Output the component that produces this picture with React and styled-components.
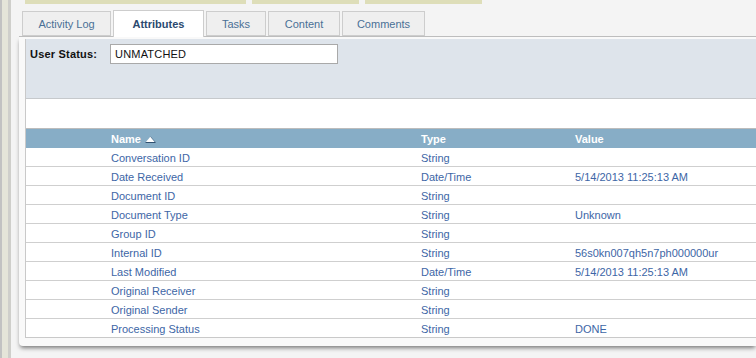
import styled, { createGlobalStyle } from "styled-components";

const GlobalStyle = createGlobalStyle`
  html, body {
    margin: 0;
    padding: 0;
    background: #f4f4f4;
    font-family: "Liberation Sans", Arial, sans-serif;
    font-size: 11px;
    overflow: hidden;
  }
`;

const Page = styled.div`
  display: flex;
  width: 756px;
  height: 358px;
  overflow: hidden;
`;

const Rail = styled.div`
  width: 19px;
  flex-shrink: 0;
  background: linear-gradient(
    to right,
    #c2c2c2 0 2px,
    #e5e5d9 2px 8px,
    #cfcfcb 8px 11px,
    #f4f4f4 11px
  );
`;

const Main = styled.div`
  flex: 1;
  display: flex;
  flex-direction: column;
  min-width: 0;
`;

const TopBars = styled.div`
  display: flex;
  gap: 6px;
  padding-left: 6px;
  height: 4px;
`;

const TopBar = styled.div`
  width: ${(p) => p.w}px;
  background: #dedeb9;
`;

const TabRow = styled.div`
  display: flex;
  align-items: flex-end;
  gap: 2px;
  margin-top: 6px;
  padding-left: 3px;
  height: 26px;
  border-bottom: 1px solid #bdbdbd;
  position: relative;
  z-index: 1;
`;

const Tab = styled.div`
  box-sizing: border-box;
  width: ${(p) => p.w}px;
  height: ${(p) => (p.active ? 27 : 25)}px;
  margin-bottom: ${(p) => (p.active ? -1 : 0)}px;
  display: flex;
  align-items: center;
  justify-content: center;
  background: ${(p) => (p.active ? "#ffffff" : "#efefef")};
  border: 1px solid #cdcdcd;
  border-bottom: ${(p) => (p.active ? "none" : "1px solid #cdcdcd")};
  color: ${(p) => (p.active ? "#2b4a6f" : "#4a6f96")};
  font-weight: ${(p) => (p.active ? "bold" : "normal")};
  font-size: 11px;
  padding-top: ${(p) => (p.active ? 0 : 1)}px;
`;

const Card = styled.div`
  flex: 1;
  display: flex;
  flex-direction: column;
  background: #f9f9f9;
  padding: 2px 0 0 6px;
  margin-bottom: 12px;
  border-bottom-left-radius: 4px;
  box-shadow: 0 3px 4px -1px rgba(0, 0, 0, 0.5);
`;

const Content = styled.div`
  border-left: 1px solid #c9c9c9;
  border-bottom: 1px solid #c9c9c9;
  background: #ffffff;
`;

const StatusPanel = styled.div`
  height: 60px;
  background: #dee4eb;
  border-bottom: 1px solid #c6c9cc;
  display: flex;
  align-items: flex-start;
  padding-top: 5px;
  box-sizing: border-box;
`;

const StatusLabel = styled.div`
  width: 80px;
  padding-left: 4px;
  font-weight: bold;
  color: #111;
  line-height: 20px;
  letter-spacing: 0.2px;
`;

const StatusInput = styled.div`
  box-sizing: border-box;
  width: 228px;
  height: 20px;
  background: #fff;
  border: 1px solid #a9a9a9;
  padding-left: 4px;
  line-height: 18px;
  color: #111;
  letter-spacing: 0.2px;
`;

const Spacer = styled.div`
  height: 29px;
  border-bottom: 1px solid #bcbcbc;
`;

const Grid = styled.div`
  display: grid;
  grid-template-columns: 85px 310px 154px 1fr;
  align-items: center;
  box-sizing: border-box;
  height: ${(p) => (p.head ? 19 : 19)}px;
  padding-top: 1px;
  background: ${(p) => (p.head ? "#87adc6" : "#ffffff")};
  border-bottom: ${(p) => (p.head ? "none" : "1px solid #cfcfcf")};
  color: ${(p) => (p.head ? "#ffffff" : "#3d66a6")};
  font-weight: ${(p) => (p.head ? "bold" : "normal")};
  &:last-child {
    border-bottom: none;
    height: 18px;
  }
`;

const Cell = styled.div`
  display: flex;
  align-items: center;
  gap: 4px;
  white-space: nowrap;
`;

const SortArrow = () => (
  <svg width="11" height="7" viewBox="0 0 11 7">
    <polygon points="5.5,0.5 10.5,6.5 0.5,6.5" fill="#ffffff" />
    <line x1="0.5" y1="6.5" x2="10.5" y2="6.5" stroke="#2f4f6f" strokeWidth="1" />
    <line x1="5.5" y1="0.5" x2="10.5" y2="6.5" stroke="#4c6f8c" strokeWidth="0.8" />
  </svg>
);

const rows = [
  ["Conversation ID", "String", ""],
  ["Date Received", "Date/Time", "5/14/2013 11:25:13 AM"],
  ["Document ID", "String", ""],
  ["Document Type", "String", "Unknown"],
  ["Group ID", "String", ""],
  ["Internal ID", "String", "56s0kn007qh5n7ph000000ur"],
  ["Last Modified", "Date/Time", "5/14/2013 11:25:13 AM"],
  ["Original Receiver", "String", ""],
  ["Original Sender", "String", ""],
  ["Processing Status", "String", "DONE"],
];

const tabs = [
  { label: "Activity Log", w: 89 },
  { label: "Attributes", w: 91, active: true },
  { label: "Tasks", w: 60 },
  { label: "Content", w: 72 },
  { label: "Comments", w: 83 },
];

export default function App() {
  return (
    <Page>
      <GlobalStyle />
      <Rail />
      <Main>
        <TopBars>
          <TopBar w={221} />
          <TopBar w={107} />
          <TopBar w={117} />
        </TopBars>
        <TabRow>
          {tabs.map((t) => (
            <Tab key={t.label} w={t.w} active={t.active}>
              {t.label}
            </Tab>
          ))}
        </TabRow>
        <Card>
          <Content>
            <StatusPanel>
              <StatusLabel>User Status:</StatusLabel>
              <StatusInput>UNMATCHED</StatusInput>
            </StatusPanel>
            <Spacer />
            <Grid head>
              <Cell />
              <Cell>
                Name <SortArrow />
              </Cell>
              <Cell>Type</Cell>
              <Cell>Value</Cell>
            </Grid>
            {rows.map(([name, type, value]) => (
              <Grid key={name}>
                <Cell />
                <Cell>{name}</Cell>
                <Cell>{type}</Cell>
                <Cell>{value}</Cell>
              </Grid>
            ))}
          </Content>
        </Card>
      </Main>
    </Page>
  );
}
